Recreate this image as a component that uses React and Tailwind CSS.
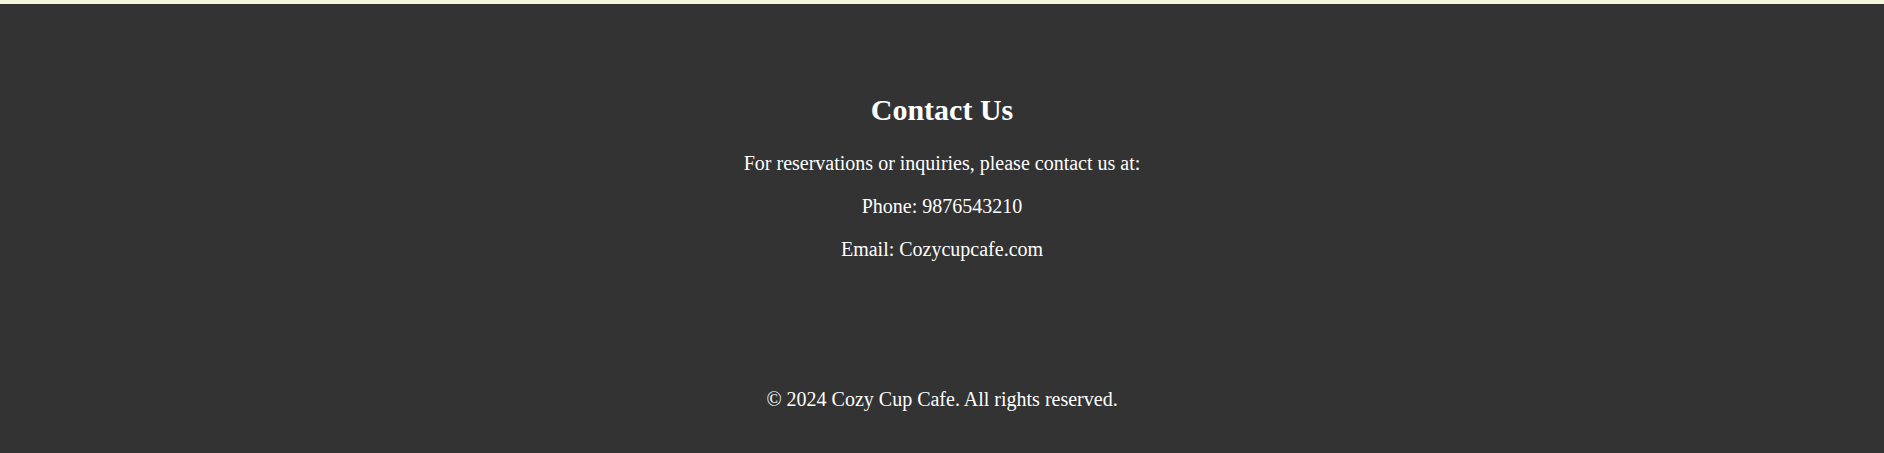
export default function App() {
  return (
    <div className="min-h-screen bg-[#333333] text-white font-['Liberation_Serif','Times_New_Roman',serif]">
      <div className="h-[4px] bg-[#f5f5dc]" />
      <section className="pt-[89px] text-center">
        <h2 className="text-[30px] font-bold leading-[34.5px]">Contact Us</h2>
        <div className="mt-[24px] flex flex-col gap-[20px] text-[20px] leading-[23px]">
          <p>For reservations or inquiries, please contact us at:</p>
          <p>Phone: 9876543210</p>
          <p>Email: Cozycupcafe.com</p>
        </div>
      </section>
      <footer className="mt-[127px] pb-[42px] text-center text-[20px] leading-[23px]">
        <p>© 2024 Cozy Cup Cafe. All rights reserved.</p>
      </footer>
    </div>
  );
}
